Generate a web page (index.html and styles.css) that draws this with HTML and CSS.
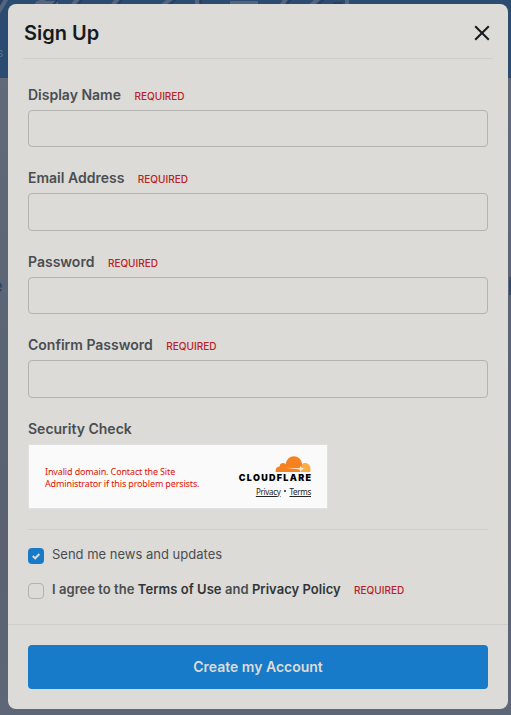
FILE: index.html
```
<!DOCTYPE html>
<html lang="en">
  <head>
    <meta charset="utf-8">
    <title>Sign Up</title>
    <link rel="stylesheet" href="styles.css">
  </head>
  <body>
    <div class="page" aria-hidden="true">
      <div class="banner">
        <svg class="banner-art" width="511" height="20" viewBox="0 0 511 20">
          <g fill="none" stroke="#56657f" stroke-width="4">
            <path d="M7 -2L-2 13M32 8L48 -4M36 3H58M72 6L80 -4M112 6L120 -4M162 6L174 -4M197 -2V6M230 3H258M281 6L288 -4M310 6L322 -4M347 -2V6"/>
          </g>
          <g fill="none" stroke="#2b3e61" stroke-width="2">
            <path d="M3 -2L-6 13M53 5L61 -4M77 6L85 -4M117 6L125 -4M168 6L180 -4M201 -2V6M286 6L293 -4M316 6L328 -4M333 3H343"/>
          </g>
        </svg>
        <span class="banner-text">s</span>
      </div>
      <span class="page-text">e</span>
      <span class="page-mark"></span>
    </div>

    <div class="modal">
      <div class="modal-header">
        <h1>Sign Up</h1>
        <button type="button" class="close" aria-label="Close">
          <svg width="16" height="16" viewBox="0 0 16 16">
            <path d="M1.2 1.2L14.8 14.8M14.8 1.2L1.2 14.8" fill="none" stroke="#171a1c" stroke-width="2"/>
          </svg>
        </button>
      </div>
      <form>
        <div class="modal-body">
          <div class="field">
            <label for="name">Display Name <span class="required">REQUIRED</span></label>
            <input type="text" id="name">
          </div>
          <div class="field">
            <label for="email">Email Address <span class="required">REQUIRED</span></label>
            <input type="text" id="email">
          </div>
          <div class="field">
            <label for="password">Password <span class="required">REQUIRED</span></label>
            <input type="password" id="password">
          </div>
          <div class="field">
            <label for="confirm">Confirm Password <span class="required">REQUIRED</span></label>
            <input type="password" id="confirm">
          </div>
          <div class="field">
            <label>Security Check</label>
            <div class="captcha">
              <p class="captcha-error">Invalid domain. Contact the Site Administrator if this problem persists.</p>
              <div class="captcha-brand">
                <svg class="cloud" width="36" height="16" viewBox="0 0 36 16">
                  <path fill="#fbad41" d="M26 16L27.5 8C28.2 7.2 29 7 29.8 7C33.2 7 35.5 9.7 35.5 13V15.6Q35.4 16 35 16Z"/>
                  <path fill="#f6821f" d="M.7 16Q.2 11.1 4.6 10.6Q4.7 7.2 8 7.1Q9.6 7.2 10.6 8.2Q12.3 .4 19 .3Q25 .5 26.8 6.8Q28 8.5 27 11L25.5 16Z"/>
                  <path d="M11 11.8L24.3 12.2L26 9.4L26.7 12L30 12.8L26.4 13.6L25.3 16L24.5 13.5Z" fill="#fff" opacity=".85"/>
                </svg>
                <span class="wordmark">CLOUDFLARE</span>
                <span class="captcha-links"><a href="#">Privacy</a><i></i><a href="#">Terms</a></span>
              </div>
            </div>
          </div>
          <div class="options">
            <label class="option">
              <input type="checkbox" checked>
              <span class="box"><svg width="16" height="16" viewBox="0 0 16 16"><path d="M4.7 8L7.2 10.3L11.4 6" fill="none" stroke="#dcdbd7" stroke-width="2"/></svg></span>
              <span>Send me news and updates</span>
            </label>
            <label class="option terms">
              <input type="checkbox">
              <span class="box"></span>
              <span>I agree to the <a href="#">Terms of Use</a> and <a href="#">Privacy Policy</a> <span class="required">REQUIRED</span></span>
            </label>
          </div>
        </div>
        <div class="modal-footer">
          <button type="button" class="submit">Create my Account</button>
        </div>
      </form>
    </div>
  </body>
</html>
```
FILE: styles.css
```
* {
  box-sizing: border-box;
}

body {
  margin: 0;
  height: 715px;
  overflow: hidden;
  padding: 4px 3px 6px 8px;
  font-family: Inter, "Liberation Sans", sans-serif;
  color: #4a4e51;
  background: #596374;
}

/* Page behind the dialog */
.page {
  position: absolute;
  inset: 0;
  z-index: -1;
  overflow: hidden;
  background: linear-gradient(#646b7b, #596475 50%, #5b6171 75%, #5c6777);
}

.banner {
  height: 78px;
  background: #2b4c70;
}

.banner-art {
  display: block;
}

.banner-text {
  position: absolute;
  left: -3px;
  top: 45px;
  font-size: 12px;
  color: #52708f;
}

.page-text {
  position: absolute;
  left: -8px;
  top: 275px;
  font-size: 18px;
  font-weight: 600;
  color: #2f4663;
}

.page-mark {
  position: absolute;
  right: 0;
  top: 277px;
  width: 2px;
  height: 18px;
  border-top: 3px solid #3d4f6b;
  background: #32496a;
}

/* Dialog */
.modal {
  height: 705px;
  border-radius: 8px;
  background: #dcdbd7;
}

.modal-header {
  display: flex;
  align-items: center;
  justify-content: space-between;
  height: 55px;
  margin: 0 15px;
  padding: 3px 3px 0 1px;
  border-bottom: 1px solid #cfcecb;
}

h1 {
  margin: 0;
  font-size: 20px;
  line-height: 24px;
  font-weight: 600;
  color: #171a1c;
}

.close {
  display: flex;
  padding: 0;
  border: 0;
  background: none;
  cursor: pointer;
}

.modal-body {
  padding: 25px 20px 0;
}

.field {
  margin-bottom: 20px;
}

.field > label {
  display: block;
  height: 22px;
  margin-bottom: 4px;
  font-size: 14px;
  line-height: 22px;
  font-weight: 600;
}

.required {
  margin-left: 10px;
  font-size: 10px;
  line-height: 1;
  font-weight: 500;
  letter-spacing: 0;
  color: #b92127;
}

.field input {
  display: block;
  width: 100%;
  height: 37.4px;
  border: 1px solid #b3b3b0;
  border-radius: 4px;
  background: transparent;
}

/* Captcha */
.captcha {
  display: flex;
  align-items: center;
  justify-content: space-between;
  width: 300px;
  height: 65px;
  padding: 0 16px;
  border: 1px solid #e0e0e0;
  background: #fafafa;
  font-family: "Noto Sans", sans-serif;
}

.captcha-error {
  width: 165px;
  margin: 3px 0 0;
  font-size: 9px;
  line-height: 12px;
  letter-spacing: -0.14px;
  color: #de1303;
}

.captcha-brand {
  display: flex;
  flex-direction: column;
  align-items: flex-end;
}

.wordmark {
  margin-top: 1px;
  margin-right: -1.3px;
  font: 900 9px/10px Inter, sans-serif;
  letter-spacing: 1.3px;
  color: #000;
}

.captcha-links {
  display: flex;
  align-items: center;
  margin-top: 3px;
  font-size: 8px;
  line-height: 11px;
  letter-spacing: -0.3px;
}

.captcha-links a {
  color: #232323;
}

.captcha-links i {
  width: 2px;
  height: 2px;
  margin: 0 3.5px;
  border-radius: 50%;
  background: #232323;
}

/* Checkboxes */
.options {
  padding-top: 14px;
  border-top: 1px solid #cfcecb;
}

.option {
  display: flex;
  height: 35px;
  gap: 8px;
  font-size: 13px;
  line-height: 21px;
}

.option input {
  display: none;
}

.box {
  flex: none;
  width: 16px;
  height: 16px;
  margin-top: 4px;
  border: 1px solid #b3b3b0;
  border-radius: 4px;
}

.option input:checked + .box {
  border: 0;
  background: #177bc9;
}

.box svg {
  display: block;
}

.terms {
  font-weight: 600;
  letter-spacing: 0.04px;
}

.terms a {
  color: #313538;
  text-decoration: none;
}

.modal-footer {
  margin-top: 10px;
  padding: 20px;
  border-top: 1px solid #cfcecb;
}

.submit {
  display: block;
  width: 100%;
  height: 44px;
  border: 0;
  border-radius: 4px;
  font: 600 14px Inter, sans-serif;
  color: #dcdbd7;
  background: #177bc9;
  cursor: pointer;
}
```
